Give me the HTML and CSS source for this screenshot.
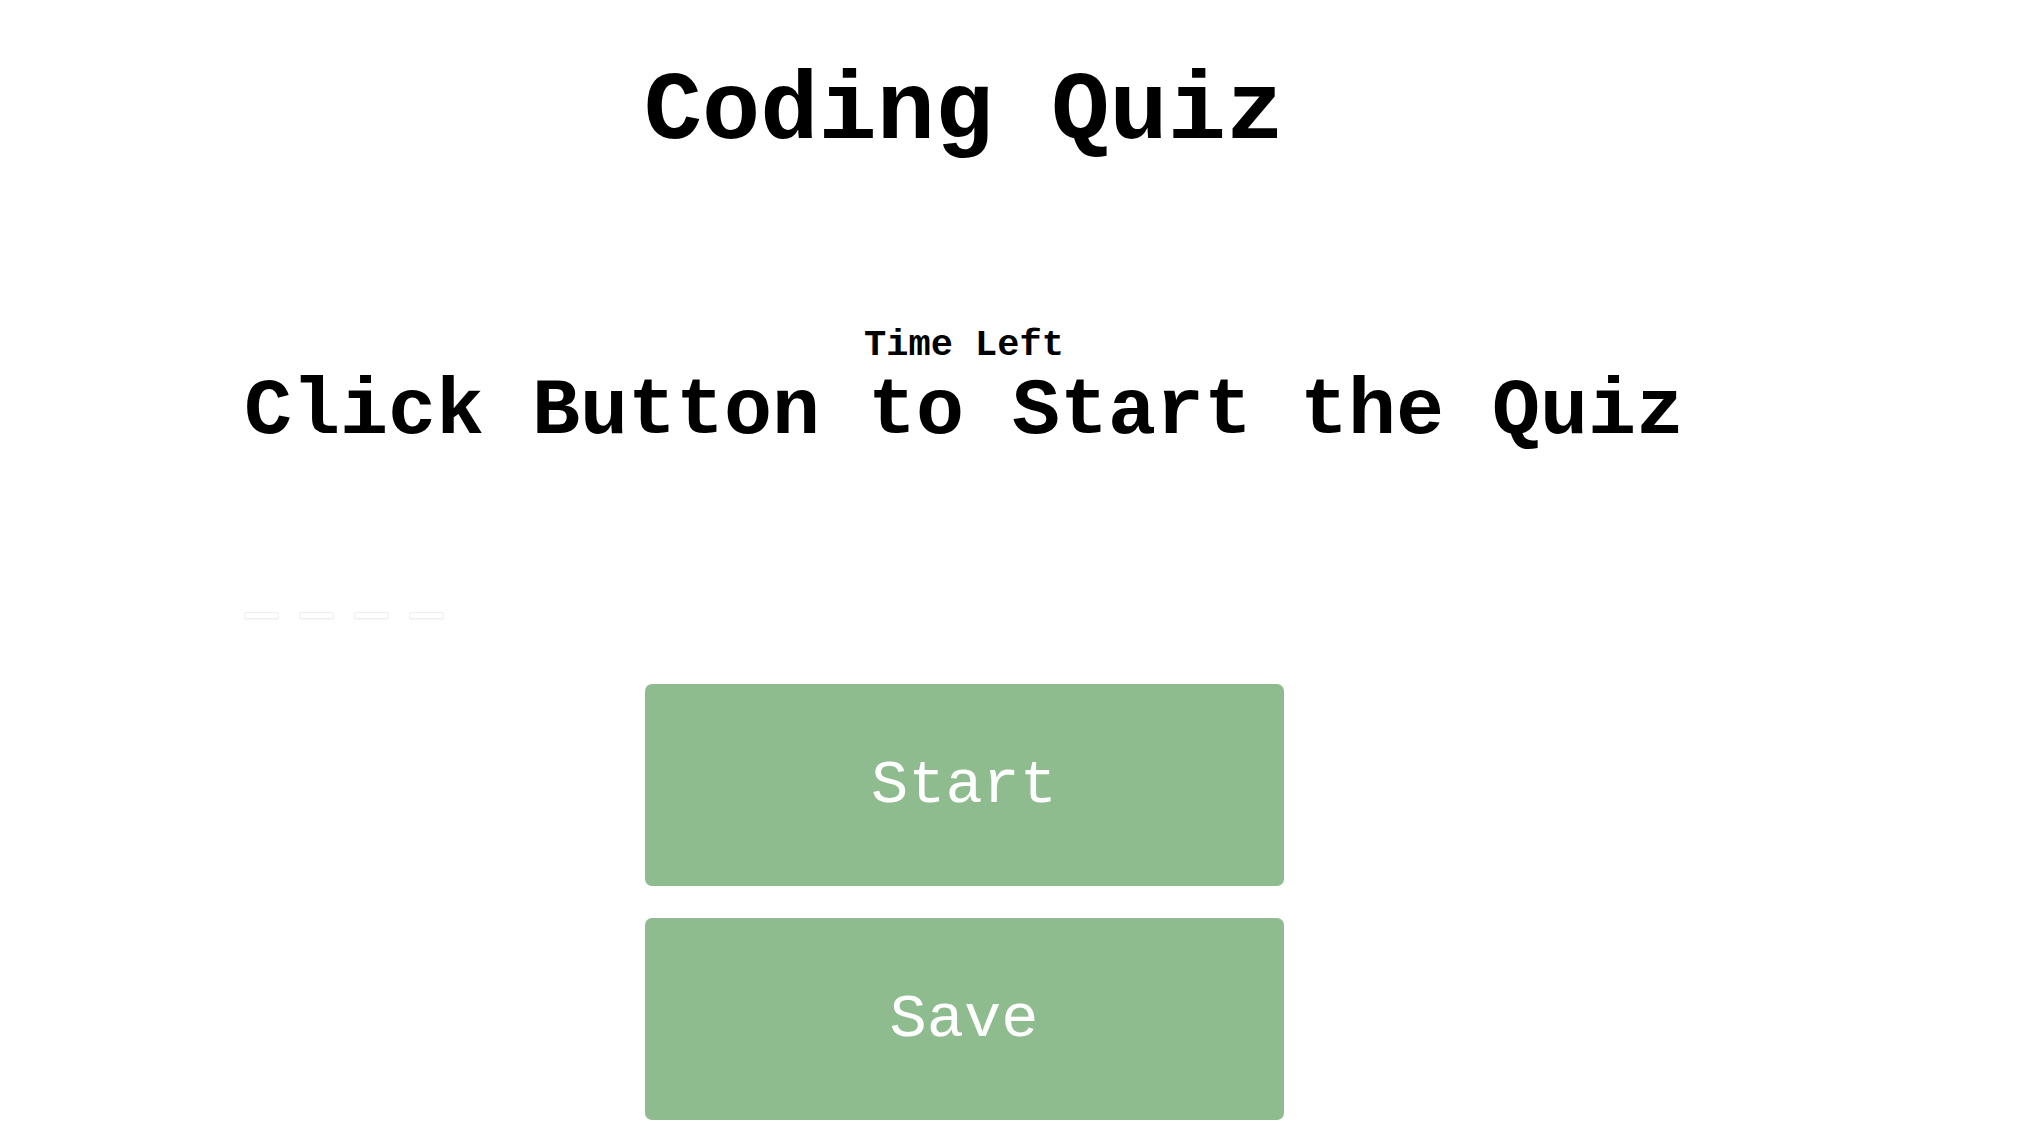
FILE: index.html
```html
<!DOCTYPE html>
<html lang="en">
<head>
<meta charset="utf-8">
<title>Coding Quiz</title>
<link rel="stylesheet" href="styles.css">
</head>
<body>
<main class="page">
  <h1 class="title">Coding Quiz</h1>
  <section class="quiz">
    <h3 class="timer">Time Left</h3>
    <h2 class="question">Click Button to Start the Quiz</h2>
    <div class="answers">
      <button class="answer"></button>
      <button class="answer"></button>
      <button class="answer"></button>
      <button class="answer"></button>
    </div>
  </section>
  <div class="controls">
    <button class="btn">Start</button>
    <button class="btn">Save</button>
  </div>
</main>
</body>
</html>
```

FILE: styles.css
```css
html, body {
  margin: 0;
  padding: 0;
  background: #ffffff;
}

body {
  font-family: "Liberation Mono", "Courier New", monospace;
  color: #000000;
  overflow: hidden;
}

.page {
  width: 1928px;
  display: flex;
  flex-direction: column;
  align-items: center;
}

.title {
  font-size: 97px;
  font-weight: 700;
  margin: 57px 0 0 0;
  line-height: normal;
}

.quiz {
  display: flex;
  flex-direction: column;
  margin-top: 157px;
}

.timer {
  font-size: 37px;
  font-weight: 700;
  text-align: center;
  margin: 0;
  line-height: normal;
}

.question {
  font-size: 80px;
  font-weight: 700;
  margin: 0;
  line-height: normal;
}

.answers {
  display: flex;
  gap: 20px;
  margin-top: 155px;
}

.answer {
  width: 35px;
  height: 7px;
  padding: 0;
  border: 1px solid #efefef;
  border-radius: 2px;
  background: #ffffff;
  box-shadow: 0 1px 1px rgba(0, 0, 0, 0.04);
}

.controls {
  display: flex;
  flex-direction: column;
  gap: 32px;
  margin-top: 65px;
}

.btn {
  width: 639px;
  height: 202px;
  border: none;
  border-radius: 7px;
  background: #8fbc8f;
  color: #ffffff;
  font-family: "Liberation Mono", "Courier New", monospace;
  font-size: 62px;
  font-weight: 400;
  padding: 0;
}
```
